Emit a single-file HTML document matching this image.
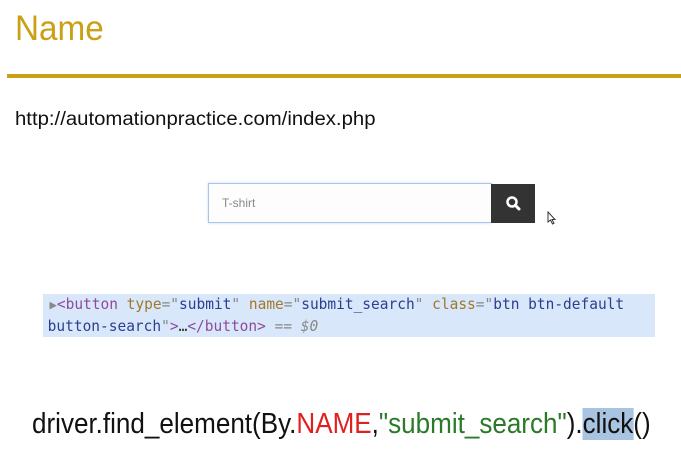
<!DOCTYPE html>
<html><head><meta charset="utf-8"><style>
body{margin:0;width:681px;height:461px;background:#fff;position:relative;overflow:hidden;font-family:"Liberation Sans",sans-serif}
.t{position:absolute;left:15px;top:9px;font-size:35px;color:#c9a016;transform:scaleX(0.95);transform-origin:left}
.line{position:absolute;left:7px;top:74px;width:674px;height:4px;background:#c9a016}
.url{position:absolute;left:15px;top:109px;font-size:19px;color:#111;transform:scaleX(1.07);transform-origin:left}
.inp{position:absolute;left:208px;top:183px;width:282px;height:38px;border:1px solid #a9c6ea;box-shadow:0 0 3px #c9dcf3;background:#fdfdfd}
.inp span{position:absolute;left:13px;top:12px;font-size:12px;color:#888}
.btn{position:absolute;left:491px;top:184px;width:44px;height:39px;background:#333}
.code{position:absolute;left:43px;top:294px;width:612px;height:43px;background:#d9e7fb;font-family:"DejaVu Sans Mono","Liberation Mono",monospace;font-size:15.5px;line-height:21px;color:#333;white-space:pre}
.code div{transform:scaleX(0.935);transform-origin:left}
.tg{color:#8e4b9a}.at{color:#a0782a}.v{color:#2a3f8e}.g{color:#888}
.d{position:absolute;left:32px;top:408px;font-size:29px;color:#111;white-space:pre;transform:scaleX(0.898);transform-origin:left}
.r{color:#e02020}.gr{color:#2a7a2a}.hl{background:#a9c4e0}
</style></head><body>
<div class="t">Name</div>
<div class="line"></div>
<div class="url">http://automationpractice.com/index.php</div>
<div class="inp"><span>T-shirt</span></div>
<div class="btn"><svg width="44" height="39" viewBox="0 0 44 39"><circle cx="21" cy="18" r="4.5" fill="none" stroke="#fff" stroke-width="2.5"/><line x1="24.5" y1="21.5" x2="28" y2="25" stroke="#fff" stroke-width="3" stroke-linecap="round"/></svg></div>
<svg style="position:absolute;left:547px;top:211px" width="10" height="14" viewBox="0 0 10 14"><path d="M1 1 L1 11 L3.5 9 L5.5 13 L7 12.3 L5 8.5 L8 8.5 Z" fill="#fff" stroke="#333" stroke-width="1"/></svg>
<div class="code"><div style="padding-left:7px"><span class="g" style="font-size:13px">▶</span><span class="tg">&lt;button</span> <span class="at">type</span><span class="g">="</span><span class="v">submit</span><span class="g">"</span> <span class="at">name</span><span class="g">="</span><span class="v">submit_search</span><span class="g">"</span> <span class="at">class</span><span class="g">="</span><span class="v">btn btn-default</span></div><div style="padding-left:5px"><span class="v">button-search</span><span class="g">"</span><span class="tg">&gt;</span>…<span class="tg">&lt;/button&gt;</span> <span class="g">== <i>$0</i></span></div></div>
<div class="d">driver.find_element(By.<span class="r">NAME</span>,<span class="gr">"submit_search"</span>).<span class="hl">click</span>()</div>
</body></html>
